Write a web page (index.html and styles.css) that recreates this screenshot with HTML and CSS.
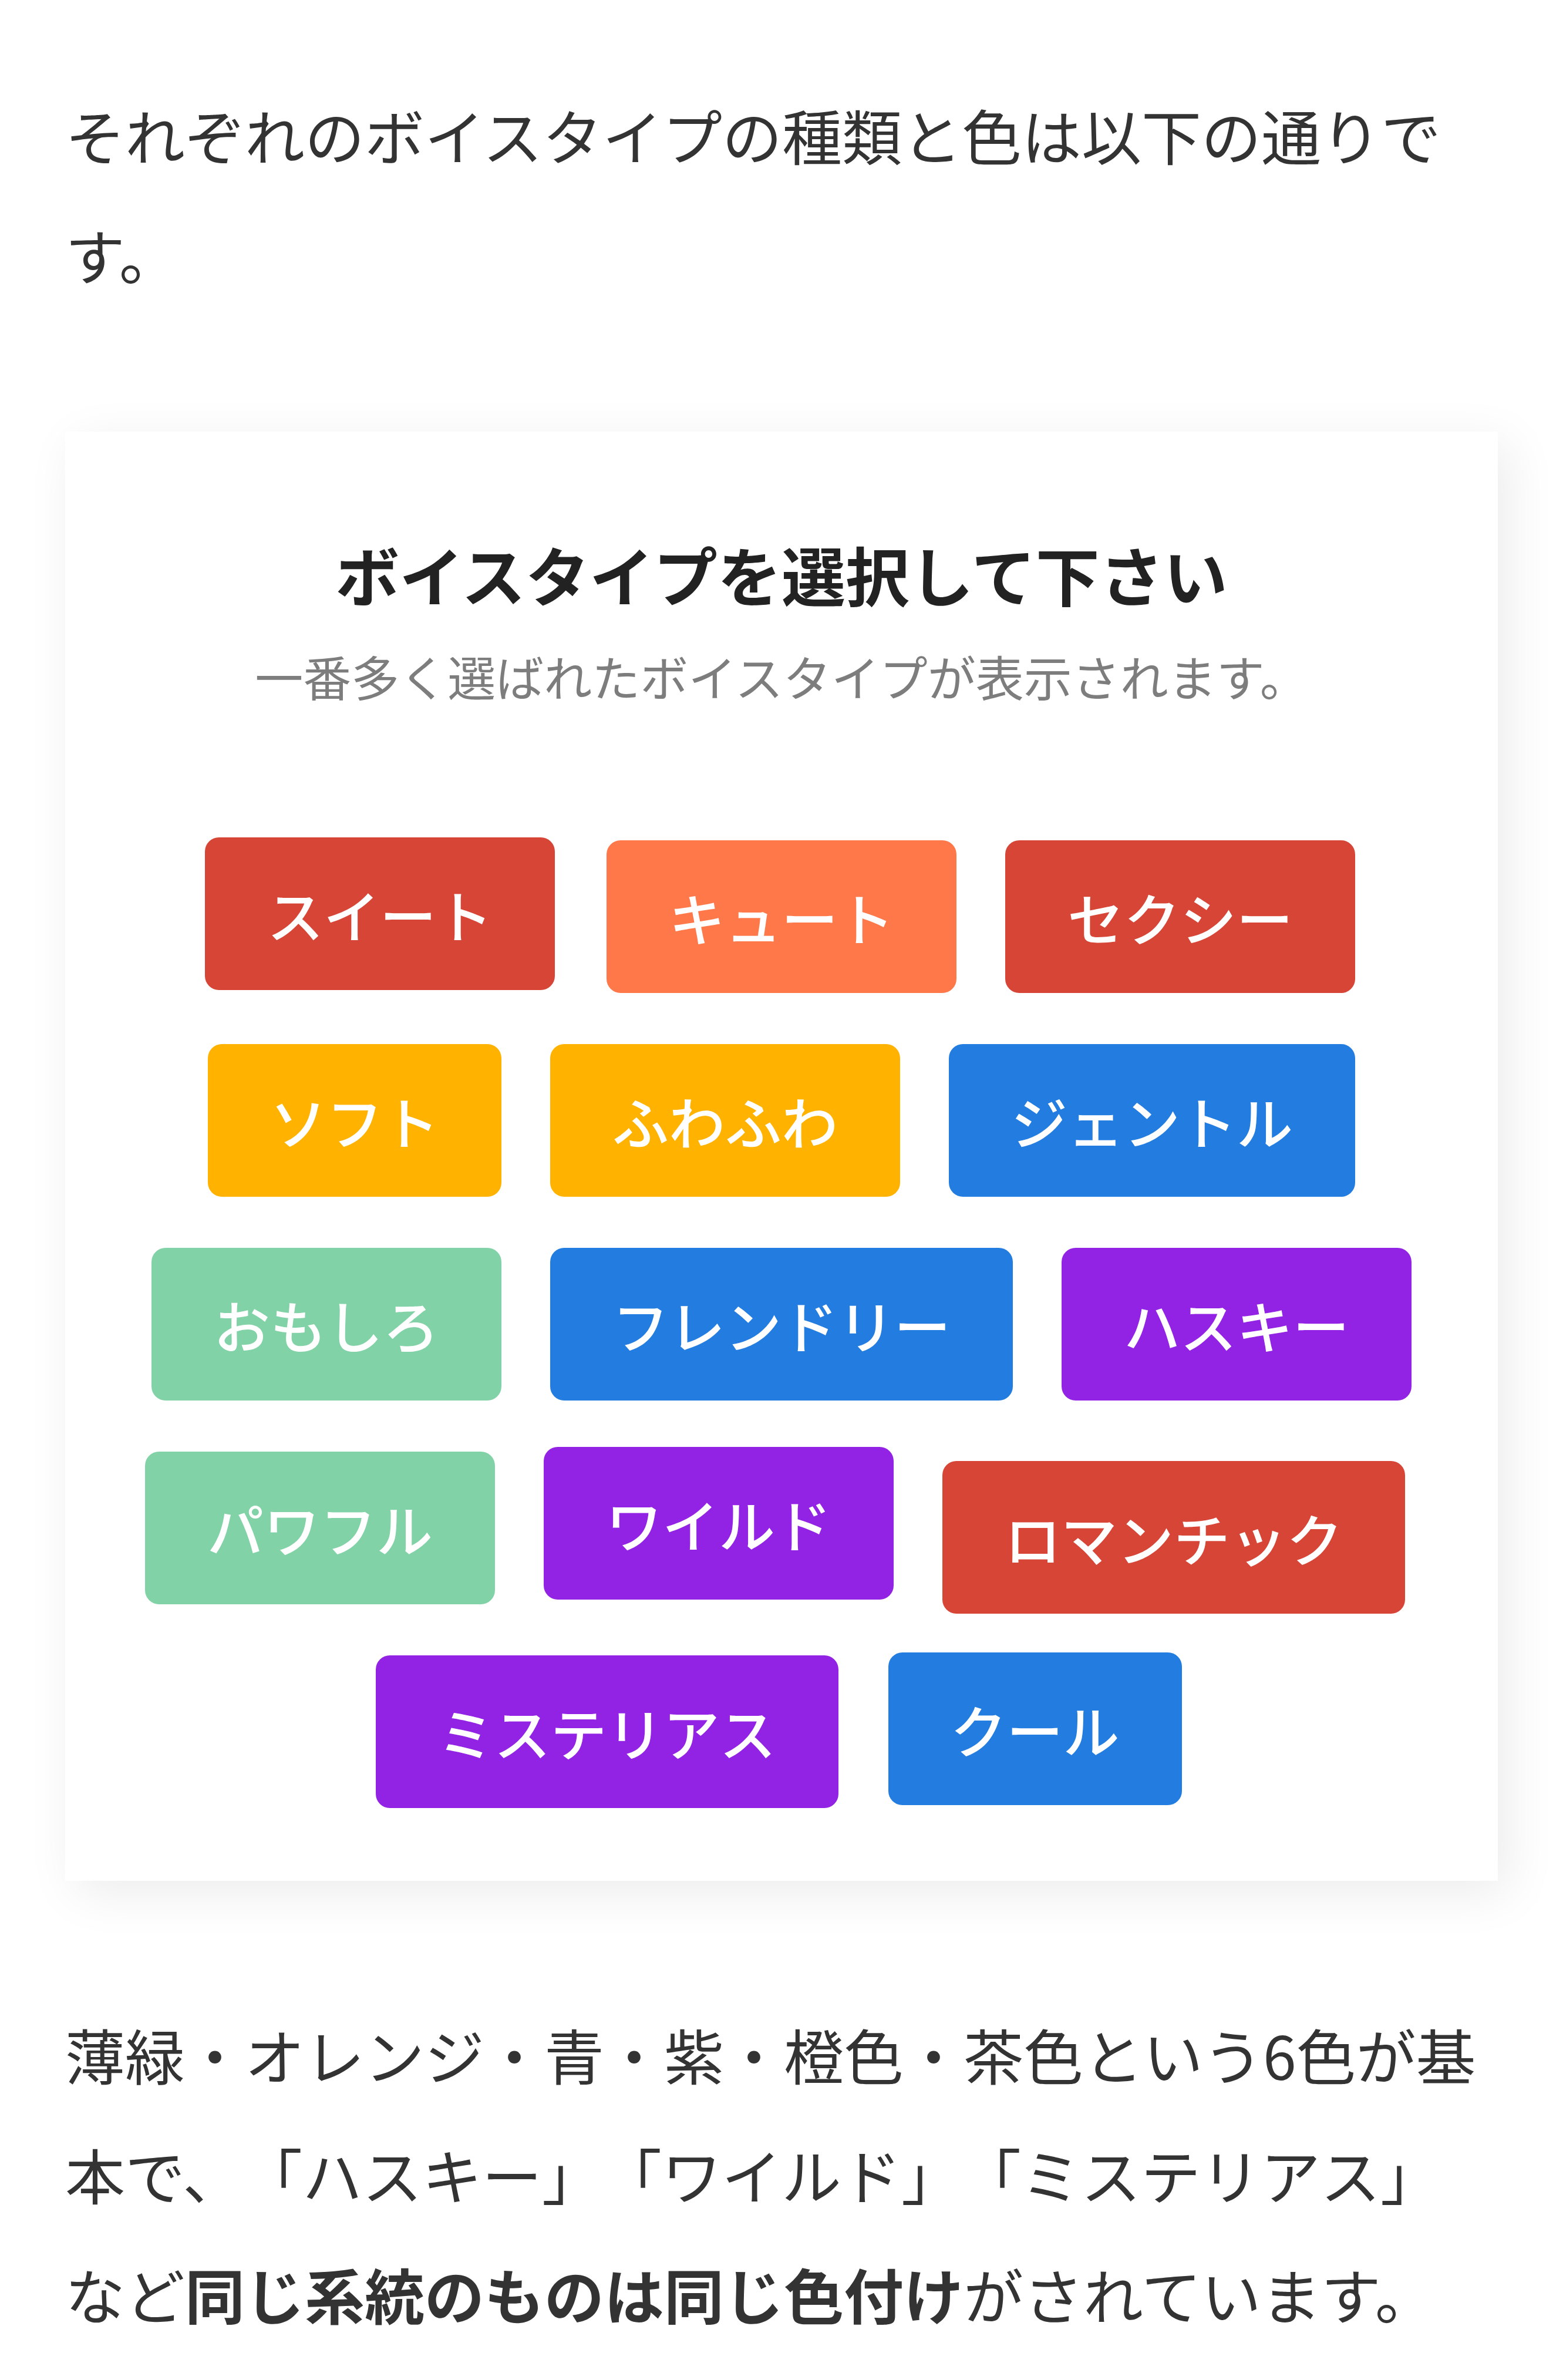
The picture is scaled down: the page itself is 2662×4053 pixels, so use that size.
FILE: index.html
```html
<!DOCTYPE html>
<html lang="ja">
<head>
    <meta charset="UTF-8">
    <meta name="viewport" content="width=device-width, initial-scale=1.0">
    <title>ボイスタイプ</title>
    <link rel="stylesheet" href="styles.css">
</head>
<body>
    <article class="post">
        <p class="post-text">それぞれのボイスタイプの種類と色は以下の通りです。</p>

        <section class="voice-card">
            <h3 class="voice-title">ボイスタイプを選択して下さい</h3>
            <p class="voice-lead">一番多く選ばれたボイスタイプが表示されます。</p>

            <ul class="voice-list">
                <li><button class="voice-btn red">スイート</button></li>
                <li><button class="voice-btn orange">キュート</button></li>
                <li><button class="voice-btn red">セクシー</button></li>
                <li><button class="voice-btn yellow">ソフト</button></li>
                <li><button class="voice-btn yellow">ふわふわ</button></li>
                <li><button class="voice-btn blue">ジェントル</button></li>
                <li><button class="voice-btn green">おもしろ</button></li>
                <li><button class="voice-btn blue">フレンドリー</button></li>
                <li><button class="voice-btn purple">ハスキー</button></li>
                <li><button class="voice-btn green">パワフル</button></li>
                <li><button class="voice-btn purple">ワイルド</button></li>
                <li><button class="voice-btn red">ロマンチック</button></li>
                <li><button class="voice-btn purple">ミステリアス</button></li>
                <li><button class="voice-btn blue">クール</button></li>
            </ul>
        </section>

        <p class="post-text">薄緑・オレンジ・青・紫・橙色・茶色という6色が基本で、「ハスキー」「ワイルド」「ミステリアス」など<strong>同じ系統のものは同じ色付け</strong>がされています。</p>
    </article>
</body>
</html>
```

FILE: styles.css
```css
body {
    margin: 0;
    background: #fff;
    color: #333;
    font-family: "Noto Sans CJK JP", "Noto Sans", sans-serif;
}
.post {
    padding: 127px 111px 0;
}
.post-text {
    margin: 0;
    font-size: 102px;
    line-height: 2;
    text-spacing-trim: space-all;
}
.post-text strong {
    font-weight: 700;
}

/* voice type picker card */
.voice-card {
    margin: 200px 0 193px;
    padding: 160px 100px 124px;
    background: #fff;
    box-shadow: 18px 20px 80px rgba(0, 0, 0, 0.08);
    text-align: center;
}
.voice-title {
    margin: 0;
    font-size: 109px;
    line-height: 1.5;
    font-weight: 700;
    color: #222;
}
.voice-lead {
    margin: 30px 0 0;
    font-size: 82px;
    line-height: 1.5;
    color: #7d7d7d;
}
.voice-list {
    list-style: none;
    margin: 219px 0 0;
    padding: 0;
    display: flex;
    flex-wrap: wrap;
    justify-content: center;
    gap: 87px 83px;
}
.voice-list li {
    display: block;
}
.voice-btn {
    display: block;
    margin: 0;
    padding: 82px 106px;
    border: 0;
    border-radius: 24px;
    font-family: inherit;
    font-size: 96px;
    line-height: 96px;
    font-weight: 500;
    color: #fff;
    white-space: nowrap;
}
.voice-btn.red { background: #d64536; }
.voice-btn.orange { background: #ff784a; }
.voice-btn.yellow { background: #ffb300; }
.voice-btn.blue { background: #237de0; }
.voice-btn.green { background: #81d2a6; }
.voice-btn.purple { background: #9222e4; }

/* buttons sit slightly off the grid */
.voice-list li:nth-child(1) { margin: -5px 5px 5px -5px; }
.voice-list li:nth-child(10) { margin-left: -11px; margin-right: 11px; }
.voice-list li:nth-child(11) { margin: -8px 11px 8px -11px; }
.voice-list li:nth-child(12) { margin: 16px 11px -16px -11px; }
.voice-list li:nth-child(13) { margin-left: -6px; margin-right: 6px; }
.voice-list li:nth-child(14) { margin: -5px 4px 5px -4px; }
```
